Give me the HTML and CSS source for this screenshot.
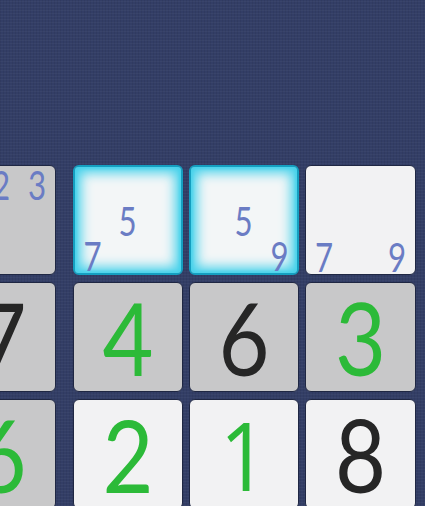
FILE: index.html
```html
<!DOCTYPE html>
<html>
<head>
<meta charset="utf-8">
<link rel="stylesheet" href="styles.css">
</head>
<body>
<div class="screen">
  <div class="board">
    <div class="cell gray"><span class="p p2">2</span><span class="p p3">3</span></div>
    <div class="cell white sel"><span class="p p5">5</span><span class="p p7">7</span></div>
    <div class="cell white sel"><span class="p p5">5</span><span class="p p9">9</span></div>
    <div class="cell white"><span class="p p7">7</span><span class="p p9">9</span></div>

    <div class="cell gray"><span class="big black">7</span></div>
    <div class="cell gray"><span class="big green">4</span></div>
    <div class="cell gray"><span class="big black">6</span></div>
    <div class="cell gray"><span class="big green">3</span></div>

    <div class="cell gray"><span class="big green">6</span></div>
    <div class="cell white"><span class="big green">2</span></div>
    <div class="cell white"><span class="big green one">1</span></div>
    <div class="cell white"><span class="big black">8</span></div>
  </div>
</div>
</body>
</html>
```
FILE: styles.css
```css
html, body {
  margin: 0;
  padding: 0;
  width: 425px;
  height: 506px;
  overflow: hidden;
}
body {
  background-color: #333e66;
  background-image:
    repeating-linear-gradient(0deg, rgba(255,255,255,0.03) 0 1px, transparent 1px 3px),
    repeating-linear-gradient(90deg, rgba(0,0,0,0.06) 0 1px, transparent 1px 3px);
  font-family: "Lato", "DejaVu Sans", sans-serif;
}
.screen {
  padding-top: 165px;
}
.board {
  display: grid;
  grid-template-columns: 110px 17px 110px 6px 110px 6px 111px;
  grid-auto-rows: 110px;
  row-gap: 7px;
  margin-left: -54px;
}
.cell:nth-child(4n+1) { grid-column: 1; }
.cell:nth-child(4n+2) { grid-column: 3; }
.cell:nth-child(4n+3) { grid-column: 5; }
.cell:nth-child(4n+4) { grid-column: 7; }
.cell {
  box-sizing: border-box;
  border: 1.5px solid #1f2743;
  border-radius: 6px;
  display: grid;
  grid-template-columns: repeat(3, minmax(0, 1fr));
  grid-template-rows: repeat(3, minmax(0, 1fr));
  overflow: visible;
}
.gray { background: #c8c8c9; }
.white { background: #f2f2f3; }
.sel {
  border: 2px solid #159fc0;
  box-shadow: inset 0 0 12px 6px #47d2eb, inset 0 0 3px 2px #6fdcef;
  background: #f3f6f7;
}
.p {
  color: #6a7cc4;
  font-size: 40px;
  font-weight: 400;
  line-height: 1;
  display: flex;
  align-items: center;
  justify-content: center;
  min-height: 0;
  transform: translateY(1px) scaleX(0.78);
}
.p2 { grid-area: 1 / 2; }
.p3 { grid-area: 1 / 3; }
.p5 { grid-area: 2 / 2; }
.p7 { grid-area: 3 / 1; }
.p9 { grid-area: 3 / 3; }
.big {
  grid-area: 1 / 1 / 4 / 4;
  display: flex;
  align-items: center;
  justify-content: center;
  font-size: 100px;
  font-weight: 400;
  line-height: 1;
  transform: scaleX(0.88);
}
.one {
  font-family: "Open Sans", "DejaVu Sans", sans-serif;
  font-size: 96px;
}
.black { color: #262626; }
.green { color: #2cba38; }
```
